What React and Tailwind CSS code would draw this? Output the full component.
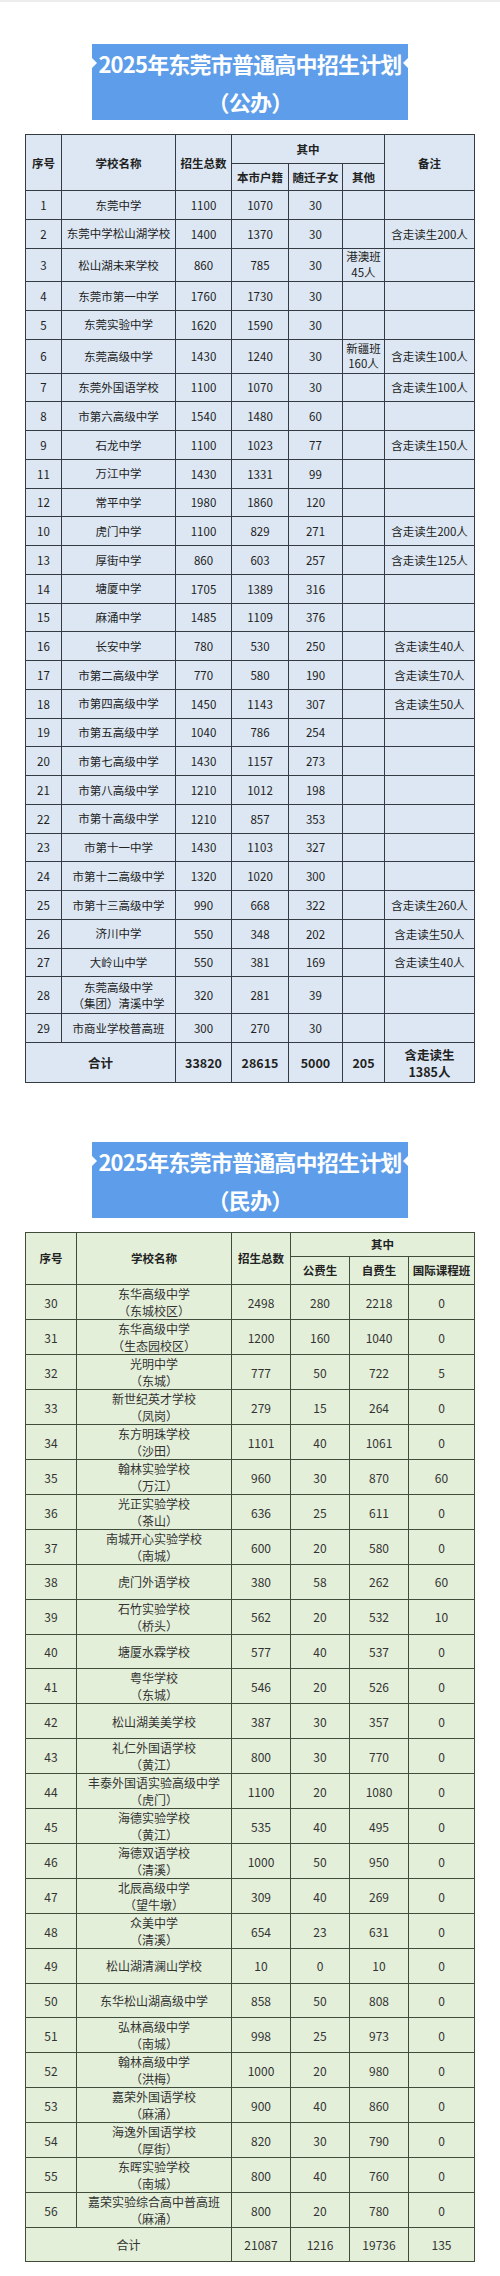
const publicRows = [
  { no: '1', name: ['东莞中学'], total: '1100', local: '1070', migrant: '30', other: [], note: [] },
  { no: '2', name: ['东莞中学松山湖学校'], total: '1400', local: '1370', migrant: '30', other: [], note: ['含走读生200人'] },
  { no: '3', name: ['松山湖未来学校'], total: '860', local: '785', migrant: '30', other: ['港澳班', '45人'], note: [], h: 'h-[33.5px]' },
  { no: '4', name: ['东莞市第一中学'], total: '1760', local: '1730', migrant: '30', other: [], note: [] },
  { no: '5', name: ['东莞实验中学'], total: '1620', local: '1590', migrant: '30', other: [], note: [] },
  { no: '6', name: ['东莞高级中学'], total: '1430', local: '1240', migrant: '30', other: ['新疆班', '160人'], note: ['含走读生100人'], h: 'h-[34px]' },
  { no: '7', name: ['东莞外国语学校'], total: '1100', local: '1070', migrant: '30', other: [], note: ['含走读生100人'] },
  { no: '8', name: ['市第六高级中学'], total: '1540', local: '1480', migrant: '60', other: [], note: [] },
  { no: '9', name: ['石龙中学'], total: '1100', local: '1023', migrant: '77', other: [], note: ['含走读生150人'] },
  { no: '11', name: ['万江中学'], total: '1430', local: '1331', migrant: '99', other: [], note: [] },
  { no: '12', name: ['常平中学'], total: '1980', local: '1860', migrant: '120', other: [], note: [] },
  { no: '10', name: ['虎门中学'], total: '1100', local: '829', migrant: '271', other: [], note: ['含走读生200人'] },
  { no: '13', name: ['厚街中学'], total: '860', local: '603', migrant: '257', other: [], note: ['含走读生125人'] },
  { no: '14', name: ['塘厦中学'], total: '1705', local: '1389', migrant: '316', other: [], note: [] },
  { no: '15', name: ['麻涌中学'], total: '1485', local: '1109', migrant: '376', other: [], note: [] },
  { no: '16', name: ['长安中学'], total: '780', local: '530', migrant: '250', other: [], note: ['含走读生40人'] },
  { no: '17', name: ['市第二高级中学'], total: '770', local: '580', migrant: '190', other: [], note: ['含走读生70人'] },
  { no: '18', name: ['市第四高级中学'], total: '1450', local: '1143', migrant: '307', other: [], note: ['含走读生50人'] },
  { no: '19', name: ['市第五高级中学'], total: '1040', local: '786', migrant: '254', other: [], note: [] },
  { no: '20', name: ['市第七高级中学'], total: '1430', local: '1157', migrant: '273', other: [], note: [] },
  { no: '21', name: ['市第八高级中学'], total: '1210', local: '1012', migrant: '198', other: [], note: [] },
  { no: '22', name: ['市第十高级中学'], total: '1210', local: '857', migrant: '353', other: [], note: [] },
  { no: '23', name: ['市第十一中学'], total: '1430', local: '1103', migrant: '327', other: [], note: [] },
  { no: '24', name: ['市第十二高级中学'], total: '1320', local: '1020', migrant: '300', other: [], note: [] },
  { no: '25', name: ['市第十三高级中学'], total: '990', local: '668', migrant: '322', other: [], note: ['含走读生260人'] },
  { no: '26', name: ['济川中学'], total: '550', local: '348', migrant: '202', other: [], note: ['含走读生50人'] },
  { no: '27', name: ['大岭山中学'], total: '550', local: '381', migrant: '169', other: [], note: ['含走读生40人'] },
  { no: '28', name: ['东莞高级中学', '（集团）清溪中学'], total: '320', local: '281', migrant: '39', other: [], note: [], h: 'h-[37px]' },
  { no: '29', name: ['市商业学校普高班'], total: '300', local: '270', migrant: '30', other: [], note: [] },
];

const privateRows = [
  ['30', ['东华高级中学', '（东城校区）'], '2498', '280', '2218', '0'],
  ['31', ['东华高级中学', '（生态园校区）'], '1200', '160', '1040', '0'],
  ['32', ['光明中学', '（东城）'], '777', '50', '722', '5'],
  ['33', ['新世纪英才学校', '（凤岗）'], '279', '15', '264', '0'],
  ['34', ['东方明珠学校', '（沙田）'], '1101', '40', '1061', '0'],
  ['35', ['翰林实验学校', '（万江）'], '960', '30', '870', '60'],
  ['36', ['光正实验学校', '（茶山）'], '636', '25', '611', '0'],
  ['37', ['南城开心实验学校', '（南城）'], '600', '20', '580', '0'],
  ['38', ['虎门外语学校'], '380', '58', '262', '60'],
  ['39', ['石竹实验学校', '（桥头）'], '562', '20', '532', '10'],
  ['40', ['塘厦水霖学校'], '577', '40', '537', '0'],
  ['41', ['粤华学校', '（东城）'], '546', '20', '526', '0'],
  ['42', ['松山湖美美学校'], '387', '30', '357', '0'],
  ['43', ['礼仁外国语学校', '（黄江）'], '800', '30', '770', '0'],
  ['44', ['丰泰外国语实验高级中学', '（虎门）'], '1100', '20', '1080', '0'],
  ['45', ['海德实验学校', '（黄江）'], '535', '40', '495', '0'],
  ['46', ['海德双语学校', '（清溪）'], '1000', '50', '950', '0'],
  ['47', ['北辰高级中学', '（望牛墩）'], '309', '40', '269', '0'],
  ['48', ['众美中学', '（清溪）'], '654', '23', '631', '0'],
  ['49', ['松山湖清澜山学校'], '10', '0', '10', '0'],
  ['50', ['东华松山湖高级中学'], '858', '50', '808', '0'],
  ['51', ['弘林高级中学', '（南城）'], '998', '25', '973', '0'],
  ['52', ['翰林高级中学', '（洪梅）'], '1000', '20', '980', '0'],
  ['53', ['嘉荣外国语学校', '（麻涌）'], '900', '40', '860', '0'],
  ['54', ['海逸外国语学校', '（厚街）'], '820', '30', '790', '0'],
  ['55', ['东晖实验学校', '（南城）'], '800', '40', '760', '0'],
  ['56', ['嘉荣实验综合高中普高班', '（麻涌）'], '800', '20', '780', '0'],
];

const Lines = ({ items }) => items.map((t, i) => <div key={i}>{t}</div>);

function TitleBox({ kind }) {
  return (
    <div className="relative mx-auto w-[316px] h-[76px] bg-[#5d9de9] text-white text-center font-bold text-[22px] tracking-[-0.8px] leading-[38px] whitespace-nowrap">
      <div className="absolute left-0 top-[14px] w-0 h-0 border-y-[5px] border-y-transparent border-l-[5px] border-l-white" />
      <div className="absolute right-0 top-[14px] w-0 h-0 border-y-[5px] border-y-transparent border-r-[5px] border-r-white" />
      <div>2025年东莞市普通高中招生计划</div>
      <div>（{kind}）</div>
    </div>
  );
}

export default function App() {
  const b1 = 'border border-[#353b42]';
  const b2 = 'border border-[#414d3b]';
  return (
    <div className="bg-white min-h-[2276px] font-['Noto_Sans_CJK_SC',sans-serif]">
      <div className="h-[2px] bg-[#ececec]" />
      <div className="pt-[42px]">
        <TitleBox kind="公办" />

        <table className="mx-auto mt-[14px] w-[449px] table-fixed border-collapse bg-[#dce7f3] text-[#222] text-[11.5px] leading-[16px] text-center">
          <colgroup>
            <col className="w-[36px]" />
            <col className="w-[114px]" />
            <col className="w-[56px]" />
            <col className="w-[57px]" />
            <col className="w-[54px]" />
            <col className="w-[42px]" />
            <col className="w-[90px]" />
          </colgroup>
          <thead className="font-bold">
            <tr className="h-[29px]">
              <td rowSpan={2} className={b1}>序号</td>
              <td rowSpan={2} className={b1}>学校名称</td>
              <td rowSpan={2} className={b1}>招生总数</td>
              <td colSpan={3} className={b1}>其中</td>
              <td rowSpan={2} className={b1}>备注</td>
            </tr>
            <tr className="h-[27px]">
              <td className={b1}>本市户籍</td>
              <td className={b1}>随迁子女</td>
              <td className={b1}>其他</td>
            </tr>
          </thead>
          <tbody>
            {publicRows.map((r) => (
              <tr key={r.no} className={r.h || 'h-[28.75px]'}>
                <td className={b1}>{r.no}</td>
                <td className={`${b1} leading-[16.5px]`}><Lines items={r.name} /></td>
                <td className={b1}>{r.total}</td>
                <td className={b1}>{r.local}</td>
                <td className={b1}>{r.migrant}</td>
                <td className={`${b1} leading-[15.5px]`}><Lines items={r.other} /></td>
                <td className={b1}><Lines items={r.note} /></td>
              </tr>
            ))}
            <tr className="h-[40px] font-bold text-[12.5px]">
              <td colSpan={2} className={b1}>合计</td>
              <td className={b1}>33820</td>
              <td className={b1}>28615</td>
              <td className={b1}>5000</td>
              <td className={b1}>205</td>
              <td className={`${b1} leading-[17px]`}><div>含走读生</div><div>1385人</div></td>
            </tr>
          </tbody>
        </table>

        <div className="mt-[59px]">
          <TitleBox kind="民办" />
        </div>

        <table className="mx-auto mt-[14px] w-[449px] table-fixed border-collapse bg-[#e3efd9] text-[#333] text-[12px] leading-[17px] text-center">
          <colgroup>
            <col className="w-[51px]" />
            <col className="w-[155px]" />
            <col className="w-[59px]" />
            <col className="w-[59px]" />
            <col className="w-[59px]" />
            <col className="w-[66px]" />
          </colgroup>
          <thead className="font-bold text-[#222] text-[11.5px]">
            <tr className="h-[23.5px]">
              <td rowSpan={2} className={b2}>序号</td>
              <td rowSpan={2} className={b2}>学校名称</td>
              <td rowSpan={2} className={b2}>招生总数</td>
              <td colSpan={3} className={b2}>其中</td>
            </tr>
            <tr className="h-[28.5px]">
              <td className={b2}>公费生</td>
              <td className={b2}>自费生</td>
              <td className={b2}>国际课程班</td>
            </tr>
          </thead>
          <tbody>
            {privateRows.map(([no, name, total, pub, self, intl]) => (
              <tr key={no} className="h-[34.7px]">
                <td className={b2}>{no}</td>
                <td className={b2}><Lines items={name} /></td>
                <td className={b2}>{total}</td>
                <td className={b2}>{pub}</td>
                <td className={b2}>{self}</td>
                <td className={b2}>{intl}</td>
              </tr>
            ))}
            <tr className="h-[34px]">
              <td colSpan={2} className={b2}>合计</td>
              <td className={b2}>21087</td>
              <td className={b2}>1216</td>
              <td className={b2}>19736</td>
              <td className={b2}>135</td>
            </tr>
          </tbody>
        </table>
      </div>
    </div>
  );
}
